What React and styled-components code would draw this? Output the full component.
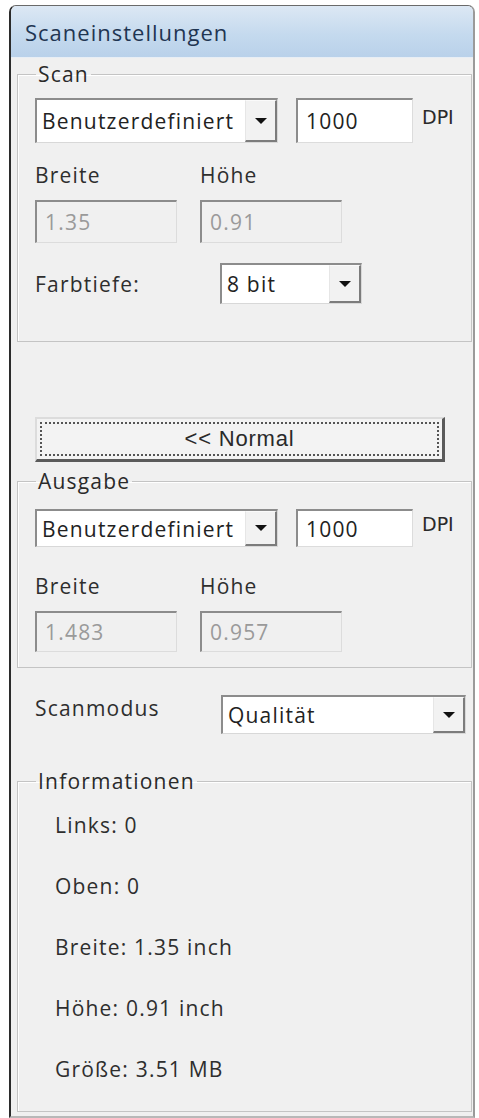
import React from "react";
import styled, { createGlobalStyle } from "styled-components";

const GlobalStyle = createGlobalStyle`
  html, body {
    margin: 0;
    padding: 0;
    background: #ffffff;
  }
  body {
    font-family: "Open Sans", "Noto Sans", sans-serif;
  }
`;

const Window = styled.div`
  margin: 5px 4px 0 9px;
  height: 1113px;
  box-sizing: border-box;
  border-left: 2px solid #2b2b2b;
  border-top: 1px solid #6a6a6a;
  border-right: 2px solid #9a9a9a;
  border-bottom: 2px solid #b8b8b8;
  border-radius: 7px 7px 0 0;
  background: #f0f0f0;
  display: flex;
  flex-direction: column;
  overflow: hidden;
`;

const TitleBar = styled.div`
  height: 51px;
  flex: none;
  display: flex;
  align-items: center;
  padding-left: 14px;
  background: linear-gradient(180deg, #dce8f4 0%, #c5daee 55%, #b9d1ea 100%);
  border-bottom: 1px solid #e8eef5;
  color: #1f3552;
  font-size: 22px;
  letter-spacing: 1px;
`;

const Content = styled.div`
  padding: 0 1px 0 6px;
  color: #2a2a2a;
  font-size: 21px;
  letter-spacing: 1.2px;
`;

const Group = styled.fieldset`
  margin: ${(p) => p.$top || 0}px 0 0 0;
  padding: 0 16px ${(p) => p.$bottom || 0}px 17px;
  border: 1px solid #c4c4c4;
  box-shadow: inset 1px 1px 0 #ffffff;
  min-width: 0;
`;

const Legend = styled.legend`
  padding: 0 2px;
  margin-left: 1px;
  line-height: 26px;
  color: #2a2a2a;
`;

const Row = styled.div`
  display: flex;
  align-items: ${(p) => p.$align || "center"};
  margin-top: ${(p) => p.$top || 0}px;
  padding-left: ${(p) => p.$indent || 0}px;
`;

const Select = styled.div`
  display: flex;
  align-items: stretch;
  width: ${(p) => p.$w}px;
  height: ${(p) => p.$h}px;
  flex: none;
  box-sizing: border-box;
  border-style: solid;
  border-width: 2px 1px 1px 2px;
  border-color: #8c8c8c #d8d8d8 #d8d8d8 #8c8c8c;
  background: #ffffff;
`;

const SelectText = styled.div`
  flex: 1;
  display: flex;
  align-items: center;
  padding-left: 5px;
  white-space: nowrap;
  overflow: hidden;
  color: #222;
`;

const ArrowBox = styled.div`
  width: 32px;
  flex: none;
  display: flex;
  align-items: center;
  justify-content: center;
  box-sizing: border-box;
  background: #f2f2f2;
  border-style: solid;
  border-width: 1px 2px 2px 1px;
  border-color: #fafafa #7c7c7c #7c7c7c #e6e6e6;
`;

const Arrow = styled.span`
  width: 0;
  height: 0;
  border-left: 6px solid transparent;
  border-right: 6px solid transparent;
  border-top: 6px solid #111;
`;

const Field = styled.div`
  width: ${(p) => p.$w}px;
  height: ${(p) => p.$h}px;
  margin-left: ${(p) => p.$left || 0}px;
  flex: none;
  box-sizing: border-box;
  display: flex;
  align-items: center;
  padding-left: 8px;
  border-style: solid;
  border-width: 2px 1px 1px 2px;
  border-color: #8c8c8c #dcdcdc #dcdcdc #8c8c8c;
  background: ${(p) => (p.$disabled ? "#f0f0f0" : "#ffffff")};
  color: ${(p) => (p.$disabled ? "#9a9a9a" : "#222")};
`;

const Unit = styled.span`
  margin-left: 9px;
  margin-top: -8px;
  font-family: "DejaVu Sans", sans-serif;
  font-size: 19px;
  letter-spacing: 0;
  color: #2a2a2a;
`;

const Label = styled.span`
  line-height: 26px;
  color: #2e2e2e;
  width: ${(p) => (p.$w ? `${p.$w}px` : "auto")};
  flex: none;
`;

const NormalButton = styled.button`
  display: block;
  margin: 75px 0 0 18px;
  width: 410px;
  height: 45px;
  padding: 3px;
  box-sizing: border-box;
  background: #f3f3f3;
  border-style: solid;
  border-width: 2px 3px 3px 2px;
  border-color: #dcdcdc #5a5a5a #5a5a5a #dcdcdc;
  font-family: "Liberation Sans", Arial, sans-serif;
  font-size: 22px;
  letter-spacing: 0.8px;
  color: #2a2a2a;
`;

const FocusRing = styled.span`
  display: flex;
  align-items: center;
  justify-content: center;
  height: 100%;
  box-sizing: border-box;
  border: 2px dotted #555;
`;

const InfoLine = styled.div`
  height: 61px;
  display: flex;
  align-items: center;
  padding-left: 20px;
  color: #2e2e2e;
`;

const Dropdown = ({ value, w, h }) => (
  <Select $w={w} $h={h}>
    <SelectText>{value}</SelectText>
    <ArrowBox>
      <Arrow />
    </ArrowBox>
  </Select>
);

const info = [
  "Links: 0",
  "Oben: 0",
  "Breite: 1.35 inch",
  "Höhe: 0.91 inch",
  "Größe: 3.51 MB",
];

export default function App() {
  return (
    <>
      <GlobalStyle />
      <Window>
        <TitleBar>Scaneinstellungen</TitleBar>
        <Content>
          <Group $top={3} $bottom={37}>
            <Legend>Scan</Legend>
            <Row $top={11}>
              <Dropdown value="Benutzerdefiniert" w={243} h={45} />
              <Field $w={117} $h={45} $left={18}>1000</Field>
              <Unit>DPI</Unit>
            </Row>
            <Row $top={19}>
              <Label $w={165}>Breite</Label>
              <Label>Höhe</Label>
            </Row>
            <Row $top={12}>
              <Field $w={142} $h={43} $disabled>1.35</Field>
              <Field $w={142} $h={43} $left={23} $disabled>0.91</Field>
            </Row>
            <Row $top={20}>
              <Label $w={185}>Farbtiefe:</Label>
              <Dropdown value="8 bit" w={142} h={41} />
            </Row>
          </Group>

          <NormalButton>
            <FocusRing>&lt;&lt; Normal</FocusRing>
          </NormalButton>

          <Group $top={6} $bottom={15}>
            <Legend>Ausgabe</Legend>
            <Row $top={15}>
              <Dropdown value="Benutzerdefiniert" w={243} h={38} />
              <Field $w={117} $h={38} $left={18}>1000</Field>
              <Unit>DPI</Unit>
            </Row>
            <Row $top={26}>
              <Label $w={165}>Breite</Label>
              <Label>Höhe</Label>
            </Row>
            <Row $top={12}>
              <Field $w={142} $h={41} $disabled>1.483</Field>
              <Field $w={142} $h={41} $left={23} $disabled>0.957</Field>
            </Row>
          </Group>

          <Row $top={27} $align="flex-start" $indent={18}>
            <Label $w={186}>Scanmodus</Label>
            <Dropdown value="Qualität" w={245} h={39} />
          </Row>

          <Group $top={34} $bottom={12}>
            <Legend>Informationen</Legend>
            {info.map((line) => (
              <InfoLine key={line}>{line}</InfoLine>
            ))}
          </Group>
        </Content>
      </Window>
    </>
  );
}
